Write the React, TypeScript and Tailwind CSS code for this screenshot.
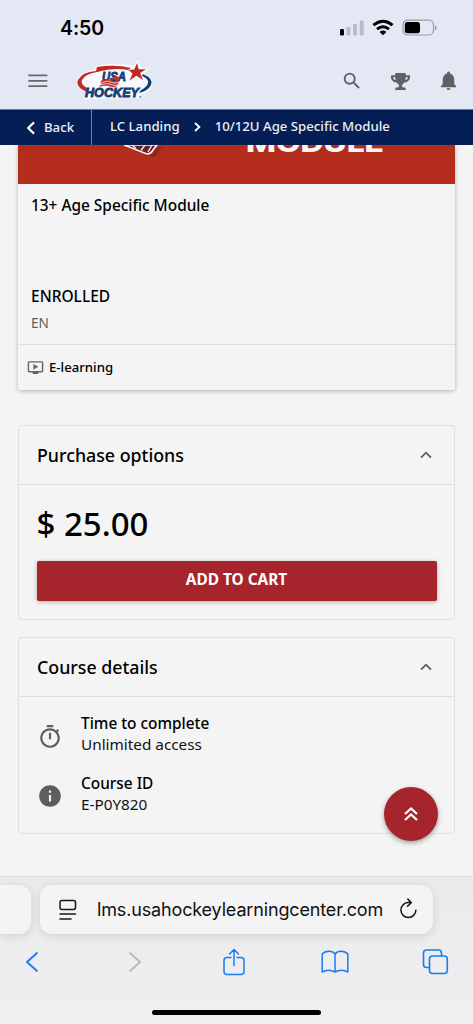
import type { ReactNode } from "react";
import { MdInfo, MdNotifications, MdOndemandVideo, MdOutlineTimer, MdSearch } from "react-icons/md";
import { FaTrophy } from "react-icons/fa";

function StatusBar() {
  return (
    <div className="flex h-[54px] items-start justify-between pr-[35px] pl-[60px] pt-[16px]">
      <span className="font-['Inter'] text-[19.5px] leading-[25px] font-semibold tracking-[-0.1px] text-black">4:50</span>
      <div className="flex items-start pt-[3px]">
        <svg width="26" height="17" viewBox="0 0 26 17" className="mt-px">
          <rect x="1" y="9" width="4" height="6.5" rx="1.2" fill="#000" />
          <rect x="7.5" y="7" width="4" height="8.5" rx="1.2" fill="#b9bcc8" />
          <rect x="14" y="4" width="4" height="11.5" rx="1.2" fill="#b9bcc8" />
          <rect x="20.7" y="0.5" width="4" height="15" rx="1.2" fill="#b9bcc8" />
        </svg>
        <svg width="22" height="17" viewBox="0 0 22 17" className="ml-[7px]" fill="none" stroke="#000" strokeWidth="3">
          <path d="M1.4 6.1 Q11 -1.7 20.6 6.1" />
          <path d="M5 10.2 Q11 5.2 17 10.2" />
          <path d="M11 16.2 L7.6 12.9 Q11 10.2 14.4 12.9 Z" fill="#000" stroke="none" />
        </svg>
        <svg width="36" height="18" viewBox="0 0 36 18" className="ml-[8px]">
          <rect x="1" y="1.2" width="30.5" height="14.8" rx="4.6" fill="none" stroke="#999ca5" strokeWidth="1.2" />
          <rect x="2.8" y="3" width="15.2" height="11.2" rx="2.7" fill="#000" />
          <path d="M33 6.2 Q36 8.7 33 11.2 Z" fill="#888b94" />
        </svg>
      </div>
    </div>
  );
}

function Logo() {
  return (
    <svg width="78" height="42" viewBox="0 0 78 42" className="ml-[29px]">
      <path d="M19 6 Q38 2 53 5 L57 5 L60 0 L64 7 L71 9 L67 14 Q77 19 75 26 Q72 33 64 34 L62 38 L7 39 L9 32 Q-2 28 0 20 Q4 11 18 10 Z" fill="#f8f9fb" />
      <path d="M20 7 Q38 4 54 8 L51 10 Q37 7 20 12 Q8 14 5 20 Q3 25 12 29 L10 32 Q-2 27 1 20 Q5 12 19 11 Z" fill="#bd2b22" />
      <path d="M66 14 Q77 19 74 25 Q71 31 62 33 L64 30 Q70 27 71 23 Q72 19 65 16 Z" fill="#153e75" />
      <path d="M60 3 L61.8 9.3 L69 9.2 L63.2 13 L66 20 L59.4 15.8 L52.5 20.5 L55.5 13.4 L51.5 10 L57.3 9.5 Z" fill="#bd2b22" />
      <text x="25" y="21" textLength="24" lengthAdjust="spacingAndGlyphs" fontFamily="Liberation Sans" fontSize="12" fontWeight="900" fontStyle="italic" fill="#153e75" stroke="#153e75" strokeWidth="0.8">USA</text>
      <path d="M34 18 Q38 15 42 17 L41 25 Q37 29 32 26 Q28 25 22 27 L25 23 Q22 23 25 20 Q30 18 36 21 Q39 22 39 20 Z" fill="#c5302a" />
      <path d="M25 22.5 Q31 20 35 22.5 Q38 24 41 22.5 M24 25 Q31 22.5 35 25 Q38 26 41 25" fill="none" stroke="#fff" strokeWidth="0.7" />
      <text x="8" y="37" textLength="54" lengthAdjust="spacingAndGlyphs" fontFamily="Liberation Sans" fontSize="12" fontWeight="900" fontStyle="italic" fill="#153e75" stroke="#153e75" strokeWidth="0.8">HOCKEY</text>
      <circle cx="63.2" cy="36.7" r=".7" fill="#153e75" />
    </svg>
  );
}

function SiteHeader() {
  return (
    <div className="flex h-[55px] items-start pt-[6px] pl-[28px] text-[#5f6062]">
      <svg width="20" height="14" viewBox="0 0 20 14" className="mt-[14px]">
        <path d="M.3 1.3h19M.3 6.8h19M.3 12.2h19" stroke="#666969" strokeWidth="1.8" />
      </svg>
      <Logo />
      <MdSearch className="mt-[10px] ml-[186px] size-[22px]" />
      <FaTrophy className="mt-[12px] ml-[28px] size-[19px]" />
      <MdNotifications className="mt-[9px] ml-[27px] size-[23px]" />
    </div>
  );
}

function Breadcrumbs() {
  return (
    <nav className="flex h-[36px] shrink-0 items-center border-t border-[#66779a] bg-[#051e56] text-[13.2px] font-medium text-[#eceef4]">
      <div className="flex h-full w-[92px] items-center border-r border-[#71809f] pl-[26px]">
        <svg width="10" height="14" viewBox="0 0 10 14" fill="none" stroke="#fff" strokeWidth="2.2"><path d="M8 1.4 2.2 7 8 12.6" /></svg>
        <span className="ml-[8px]">Back</span>
      </div>
      <span className="ml-[18px] pb-[2px]">LC Landing</span>
      <svg width="7" height="10" viewBox="0 0 7 10" className="mx-[14px] mb-px" fill="none" stroke="#fff" strokeWidth="1.8"><path d="m1 1 4.4 4L1 9" /></svg>
      <span className="pb-[2px]">10/12U Age Specific Module</span>
    </nav>
  );
}

function CourseCard() {
  return (
    <section className="h-[245px] w-[437px] shrink-0 rounded-b-[2px] bg-[#f4f4f4] shadow-[0_1px_4px_rgba(0,0,0,0.28)]">
      <div className="relative h-[39px] overflow-hidden bg-[#b42c1c]">
        <svg width="50" height="20" viewBox="0 0 50 20" className="absolute top-0 left-[98px]">
          <path d="M7 0 35 10Q39 11 41 5L45 0Z" fill="#632019" opacity=".45" transform="translate(1 2)" />
          <path d="M8 0 29 8.3Q34 10.5 37 5L41 0Z" fill="#6b2025" stroke="#f4f4f4" strokeWidth="1.7" />
          <path d="M16 0l4 3.5M25 5.5l4-5.5M32 7l4-7" stroke="#f4f4f4" strokeWidth="1.3" />
        </svg>
        <svg width="142" height="10" viewBox="0 0 142 10" className="absolute top-0 left-[227px]">
          <text x="1" y="7.4" textLength="138" lengthAdjust="spacingAndGlyphs" fontFamily="Inter" fontSize="25" fontWeight="800" fill="#f8f5f4">MODULE</text>
        </svg>
      </div>
      <div className="h-[161px] border-b border-[#dedede] px-[13px] pt-[10px] text-black">
        <h1 className="text-[15.4px] leading-[24px] font-medium">13+ Age Specific Module</h1>
        <p className="mt-[66px] text-[15.5px] leading-[24px] font-medium">ENROLLED</p>
        <p className="mt-[5px] text-[13.6px] leading-[20px] text-[#5f5f5f]">EN</p>
      </div>
      <div className="flex h-[45px] items-center pl-[9px]">
        <MdOndemandVideo className="size-[17px] text-[#666]" />
        <span className="ml-[5px] text-[13.2px] font-medium">E-learning</span>
      </div>
    </section>
  );
}

function Panel({ title, children }: { title: string; children: ReactNode }) {
  return (
    <section className="w-[437px] shrink-0 rounded-[4px] border border-[#dfdfdf]">
      <header className="flex h-[59px] items-center justify-between border-b border-[#dfdfdf] pr-[22px] pl-[18px]">
        <h2 className="text-[17.8px] font-medium text-black">{title}</h2>
        <svg width="12" height="8" viewBox="0 0 12 8" fill="none" stroke="#5e5e5e" strokeWidth="1.8"><path d="m1 6.7 5-5 5 5" /></svg>
      </header>
      {children}
    </section>
  );
}

function Detail({ icon, title, value }: { icon: ReactNode; title: string; value: string }) {
  return (
    <div className="flex h-[60px]">
      <div className="flex w-[44px] text-[#5e5e5e]">{icon}</div>
      <div className="text-[15.3px] leading-[21px] text-[#111]">
        <p className="text-[15.4px] font-medium text-black">{title}</p>
        <p>{value}</p>
      </div>
    </div>
  );
}

function BrowserBar() {
  return (
    <footer className="relative flex h-[148px] shrink-0 flex-col border-t border-[#dedede] bg-gradient-to-b from-[#ebebeb] to-[#efeff2]">
      <div className="flex pt-[8px]">
        <div className="h-[49px] w-[31px] rounded-r-[12px] bg-[#f4f4f4] shadow-[0_2px_10px_rgba(0,0,0,0.12)]" />
        <div className="ml-[9px] flex h-[49px] w-[393px] items-center rounded-[12px] bg-[#f4f4f4] pl-[18px] shadow-[0_2px_10px_rgba(0,0,0,0.12)]">
          <svg width="20" height="22" viewBox="0 0 20 22" fill="none" stroke="#161616" strokeWidth="1.5" strokeLinecap="round">
            <rect x="2" y="1.6" width="15.5" height="9" rx="2" />
            <path d="M2 15h15.5M2 20h11" />
          </svg>
          <span className="ml-[19px] w-[287px] font-['Inter'] text-[18px] tracking-[-0.15px] whitespace-nowrap text-[#111]">lms.usahockeylearningcenter.com</span>
          <svg width="20" height="22" viewBox="0 0 20 22" className="mb-[2px] ml-[14px]" fill="none" stroke="#111" strokeWidth="1.5" strokeLinecap="round" strokeLinejoin="round">
            <path d="M12.5 4.7Q11.5 4.4 10 4.5A7.5 7.5 0 1 0 17.9 12.2M9.8 1 13.3 4.8 9.5 8.2" />
          </svg>
        </div>
      </div>
      <div className="flex h-[57px] items-center pb-[2px] pl-[25px] text-[#167bf5]">
        <svg width="14" height="22" viewBox="0 0 14 22" fill="none" stroke="currentColor" strokeWidth="1.8" strokeLinecap="round" strokeLinejoin="round"><path d="M12 2 2 11l10 9" /></svg>
        <svg width="14" height="22" viewBox="0 0 14 22" className="ml-[89px]" fill="none" stroke="#b9b9bb" strokeWidth="1.8" strokeLinecap="round" strokeLinejoin="round"><path d="m2 2 10 9-10 9" /></svg>
        <svg width="24" height="28" viewBox="0 0 24 28" className="ml-[80px]" fill="none" stroke="currentColor" strokeWidth="1.5" strokeLinecap="round" strokeLinejoin="round"><path d="M12 17.5V2M7.5 6 12 1.5 16.5 6M9 9.5H5q-3 0-3 3v11q0 3 3 3h14q3 0 3-3v-11q0-3-3-3h-4" /></svg>
        <svg width="28" height="24" viewBox="0 0 28 24" className="ml-[75px]" fill="none" stroke="currentColor" strokeWidth="1.5" strokeLinejoin="round"><path d="M14 4Q12 1.2 8 1.2 3.5 1.2 1.2 4V22Q7.5 18.5 14 22 20.5 18.5 26.8 22V4Q24.5 1.2 20 1.2 16 1.2 14 4ZM14 4V22" /></svg>
        <svg width="27" height="26" viewBox="0 0 27 26" className="ml-[73px]" fill="none" stroke="currentColor" strokeWidth="1.6"><path d="M7 18.5H4.5q-3 0-3-3V4q0-3 3-3h12q3 0 3 3v3" /><rect x="7.5" y="7" width="17.8" height="17.5" rx="3" /></svg>
      </div>
      <div className="mx-auto mt-[19px] h-[5px] w-[169px] rounded-full bg-black" />
    </footer>
  );
}

export default function App() {
  return (
    <div className="relative flex h-[1024px] w-[473px] flex-col overflow-hidden bg-[#f4f4f4] font-['Noto_Sans',sans-serif]">
      <header className="h-[109px] shrink-0 bg-[#e4e8f4]">
        <StatusBar />
        <SiteHeader />
      </header>
      <Breadcrumbs />
      <main className="flex h-[731px] shrink-0 flex-col overflow-hidden pl-[18px]">
        <CourseCard />
        <div className="mt-[35px] flex flex-col gap-[17px]">
          <Panel title="Purchase options">
            <div className="h-[134px] px-[17.5px] pt-[18px]">
              <p className="text-[33px] leading-[42px] font-medium text-black">$ 25.00</p>
              <button className="mt-[16px] h-[40px] w-full rounded-[2px] bg-[#a6252d] pb-[2px] text-[15.4px] font-bold text-white shadow-[0_1px_4px_rgba(0,0,0,0.3)]">ADD TO CART</button>
            </div>
          </Panel>
          <Panel title="Course details">
            <div className="h-[136px] pt-[16px] pl-[18px]">
              <Detail icon={<MdOutlineTimer className="mt-[11px] size-[26px]" />} title="Time to complete" value="Unlimited access" />
              <Detail icon={<MdInfo className="mt-[10px] size-[26px]" />} title="Course ID" value="E-P0Y820" />
            </div>
          </Panel>
        </div>
      </main>
      <button className="absolute top-[787px] left-[384px] flex size-[54px] items-center justify-center rounded-full bg-[#a6252d] shadow-[0_2px_5px_rgba(0,0,0,0.35)]" aria-label="Back to top">
        <svg width="16" height="16" viewBox="0 0 16 16" fill="none" stroke="#fff" strokeWidth="2.2"><path d="m2 8 6-5.5L14 8M2 14l6-5.5 6 5.5" /></svg>
      </button>
      <BrowserBar />
    </div>
  );
}
